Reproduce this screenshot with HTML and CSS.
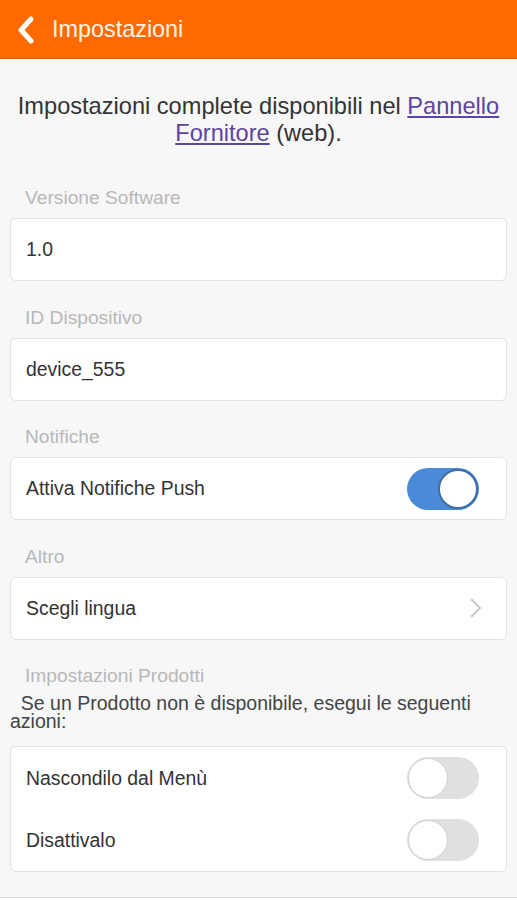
FILE: index.html
```html
<!DOCTYPE html>
<html lang="it">
<head>
<meta charset="utf-8">
<title>Impostazioni</title>
<link rel="stylesheet" href="styles.css">
</head>
<body>
<header class="bar">
  <svg class="back" width="20" height="28" viewBox="0 0 20 28" aria-hidden="true">
    <path d="M15 3 L5 14 L15 25" fill="none" stroke="#fff" stroke-width="5" stroke-linecap="round" stroke-linejoin="round"/>
  </svg>
  <h1 class="title">Impostazioni</h1>
</header>
<main class="content">
  <p class="intro">Impostazioni complete disponibili nel <a href="#" class="link">Pannello Fornitore</a> (web).</p>

  <div class="label first">Versione Software</div>
  <div class="card"><div class="row">1.0</div></div>

  <div class="label">ID Dispositivo</div>
  <div class="card"><div class="row">device_555</div></div>

  <div class="label">Notifiche</div>
  <div class="card">
    <div class="row">
      <span>Attiva Notifiche Push</span>
      <span class="toggle on"><span class="knob"></span></span>
    </div>
  </div>

  <div class="label">Altro</div>
  <div class="card">
    <div class="row">
      <span>Scegli lingua</span>
      <svg class="chev" width="14" height="22" viewBox="0 0 14 22" aria-hidden="true">
        <path d="M3 2 L12 11 L3 20" fill="none" stroke="#c8c8c8" stroke-width="2"/>
      </svg>
    </div>
  </div>

  <div class="label">Impostazioni Prodotti</div>
  <p class="desc">&nbsp;&nbsp;Se un Prodotto non è disponibile, esegui le seguenti azioni:</p>
  <div class="card">
    <div class="row tall">
      <span>Nascondilo dal Menù</span>
      <span class="toggle"><span class="knob"></span></span>
    </div>
    <div class="row tall">
      <span>Disattivalo</span>
      <span class="toggle"><span class="knob"></span></span>
    </div>
  </div>
</main>
<footer class="tabs"></footer>
</body>
</html>
```

FILE: styles.css
```css
* { box-sizing: border-box; }
html, body { margin: 0; padding: 0; }
body {
  background: #f7f7f7;
  font-family: "Liberation Sans", Arial, sans-serif;
  color: #333;
  width: 517px;
  height: 900px;
  overflow: hidden;
  position: relative;
}
.bar {
  height: 59px;
  background: #ff6a00;
  border-bottom: 1px solid #e05c00;
  display: flex;
  align-items: center;
  padding-left: 16px;
}
.back { display: block; margin-top: 1px; }
.title {
  margin: 0 0 0 16px;
  font-size: 23.4px;
  font-weight: normal;
  color: #fff4ea;
}
.content { padding: 0 10px; }
.intro {
  margin: 34px 0 0;
  text-align: center;
  font-size: 23.6px;
  line-height: 27px;
  color: #333;
}
.link { color: #5e43a0; text-decoration: underline; }
.label {
  margin-top: 24.5px;
  padding-left: 15px;
  font-size: 19.2px;
  line-height: 24px;
  color: #b8b8b8;
}
.label.first { margin-top: 39px; }
.card {
  margin-top: 8px;
  background: #fff;
  border: 1px solid #e2e2e2;
  border-radius: 6px;
}
.row {
  height: 61px;
  display: flex;
  align-items: center;
  justify-content: space-between;
  padding: 0 24px 0 15px;
  font-size: 19.4px;
  color: #333;
}
.card .row .toggle { margin-right: 3px; }
.row.tall { height: 62px; padding-right: 24px; }
.desc {
  margin: 6px 0 0;
  font-size: 19.5px;
  line-height: 18px;
  color: #444;
}
.desc + .card { margin-top: 16px; }
.toggle {
  width: 72px;
  height: 42px;
  border-radius: 21px;
  background: #e0e0e0;
  display: flex;
  align-items: center;
  padding: 0 1px;
  flex: none;
}
.knob {
  width: 40px;
  height: 40px;
  border-radius: 50%;
  background: #fff;
  border: 1px solid #d0d0d0;
}
.toggle.on {
  background: #4a8ad6;
  justify-content: flex-end;
}
.toggle.on .knob { border: 2px solid #3f6ea5; }
.chev { display: block; }
.tabs {
  position: absolute;
  left: 0; right: 0; top: 897px;
  height: 10px;
  background: #fff;
  border-top: 1px solid #d8d8d8;
}
```
